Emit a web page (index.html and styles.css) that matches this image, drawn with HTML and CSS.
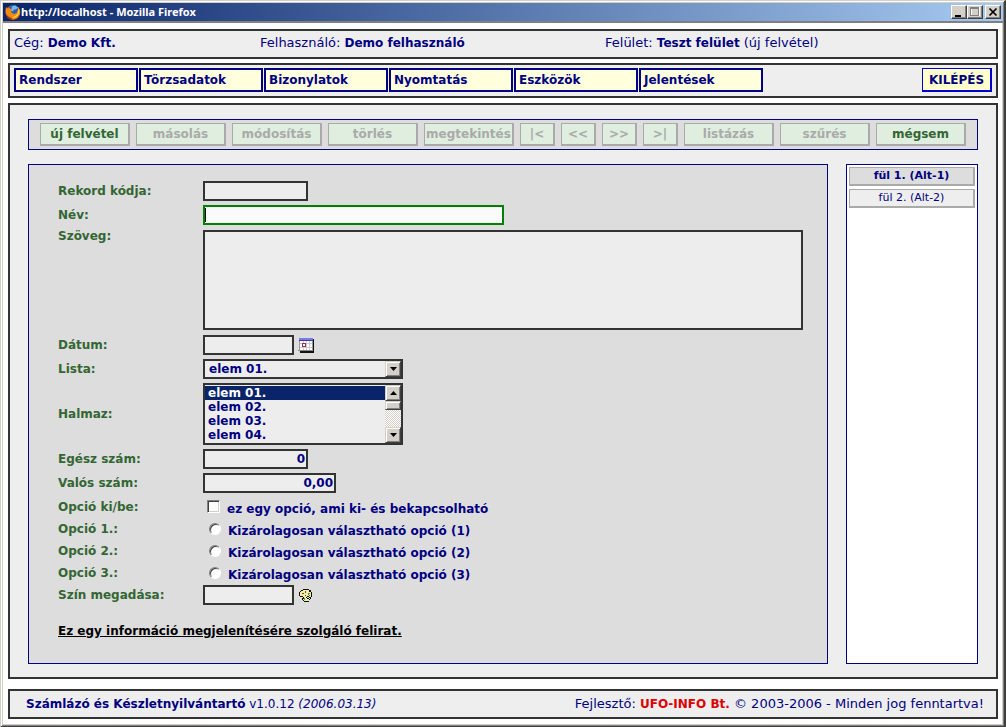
FILE: index.html
```html
<!DOCTYPE html>
<html lang="hu">
<head>
<meta charset="utf-8">
<title>http://localhost</title>
<link rel="stylesheet" href="styles.css">
</head>
<body>
<div class="window">
  <header class="titlebar">
    <svg class="app-icon" viewBox="0 0 16 16" width="16" height="16" aria-hidden="true">
      <circle cx="8" cy="8.500" r="7.300" fill="#d9580c"/>
      <circle cx="8.600" cy="6" r="5.200" fill="#2a5fb0"/>
      <path d="M7 2.500l3-1 3 2-2 2-2 0-1 2-2-1z" fill="#79b7e8"/>
      <path d="M1 3l1 1.500L4.500 4 6 5.500 7.500 6 6 7.500l1 1.500 2.500 1 2-1 1.500-3L13 3l2 3v4l-3 4-4 1.500L3 14 .8 10 .5 6z" fill="#f28a14"/>
      <path d="M13.500 4l1 3-1 4-3 2.500-4 .5 3-1.500 3-2.500z" fill="#ffd23c"/>
      <path d="M1 10l3 3 4 1.500-3 .5-3-2z" fill="#9c2d08"/>
    </svg>
    <h1 class="title">http://localhost - Mozilla Firefox</h1>
    <div class="window-buttons">
      <button type="button" class="win-btn" aria-label="Minimize"><svg viewBox="0 0 12 10" width="12" height="10"><path d="M2 8h6v2H2z" fill="#000"/></svg></button>
      <button type="button" class="win-btn" aria-label="Maximize"><svg viewBox="0 0 12 10" width="12" height="10" shape-rendering="crispEdges"><path d="M2.500 .5h8v8h-8z" fill="none" stroke="#fff"/><path d="M1.500 .5h8v8h-8zM1.500 1.500h8" fill="none" stroke="#808080"/></svg></button>
      <button type="button" class="win-btn close" aria-label="Close"><svg viewBox="0 0 12 10" width="12" height="10"><path d="M2.500 1.500l7 7M9.500 1.500l-7 7" stroke="#000" stroke-width="1.700"/></svg></button>
    </div>
  </header>
  <main class="page">
    <section class="panel info">
      <p>Cég: <b>Demo Kft.</b></p>
      <p>Felhasználó: <b>Demo felhasználó</b></p>
      <p>Felület: <b>Teszt felület</b> (új felvétel)</p>
    </section>
    <nav class="panel menu">
      <button type="button" class="menu-btn">Rendszer</button>
      <button type="button" class="menu-btn">Törzsadatok</button>
      <button type="button" class="menu-btn">Bizonylatok</button>
      <button type="button" class="menu-btn">Nyomtatás</button>
      <button type="button" class="menu-btn">Eszközök</button>
      <button type="button" class="menu-btn">Jelentések</button>
      <button type="button" class="exit">KILÉPÉS</button>
    </nav>
    <section class="panel work">
      <div class="toolbar">
        <button type="button" class="tool">új felvétel</button>
        <button type="button" class="tool" disabled>másolás</button>
        <button type="button" class="tool" disabled>módosítás</button>
        <button type="button" class="tool" disabled>törlés</button>
        <button type="button" class="tool" disabled>megtekintés</button>
        <button type="button" class="tool small" disabled>|&lt;</button>
        <button type="button" class="tool small" disabled>&lt;&lt;</button>
        <button type="button" class="tool small" disabled>&gt;&gt;</button>
        <button type="button" class="tool small" disabled>&gt;|</button>
        <button type="button" class="tool" disabled>listázás</button>
        <button type="button" class="tool" disabled>szűrés</button>
        <button type="button" class="tool">mégsem</button>
      </div>
      <div class="columns">
        <form class="form">
          <div class="row"><label for="code">Rekord kódja:</label><input id="code" class="field w-code" type="text"></div>
          <div class="row"><label for="name">Név:</label><span class="active"><input id="name" class="field w-name" type="text"></span></div>
          <div class="row top"><label for="text">Szöveg:</label><textarea id="text" class="field area"></textarea></div>
          <div class="row"><label for="date">Dátum:</label><input id="date" class="field w-date" type="text">
            <button type="button" class="icon-btn" aria-label="Naptár"><svg viewBox="0 0 16 16" width="16" height="16" shape-rendering="crispEdges"><path d="M2 2h14v14H2z" fill="#111"/><path d="M1 2h14v12H1z" fill="#9a9aa2"/><path d="M2 4h12v9H2z" fill="#fff"/><path d="M5.500 4v9M8.500 4v9M11.500 4v9M2 6.500h12M2 10.500h12" stroke="#ccc"/><path d="M1 1h14v2H1z" fill="#7b7be8"/><path d="M1 3h14v1H1z" fill="#3c3ca0"/><path d="M4.500 6.500h3v3h-3z" fill="#fff" stroke="#a0285a"/><path d="M0 13h14v1H0z" fill="#888"/></svg></button></div>
          <div class="row"><label for="list">Lista:</label><span class="combo"><select id="list"><option>elem 01.</option><option>elem 02.</option></select><span class="sb-btn"><svg viewBox="0 0 7 4" width="7" height="4"><path d="M0 0h7L3.500 4z"/></svg></span></span></div>
          <div class="row"><label for="set">Halmaz:</label><span class="listbox"><select id="set" size="4"><option class="chosen">elem 01.</option><option>elem 02.</option><option>elem 03.</option><option>elem 04.</option></select><span class="scroll"><span class="sb-btn"><svg viewBox="0 0 7 4" width="7" height="4"><path d="M0 4h7L3.500 0z"/></svg></span><span class="thumb"></span><span class="track"></span><span class="sb-btn"><svg viewBox="0 0 7 4" width="7" height="4"><path d="M0 0h7L3.500 4z"/></svg></span></span></span></div>
          <div class="row"><label for="int">Egész szám:</label><input id="int" class="field w-code num" type="text" value="0"></div>
          <div class="row"><label for="real">Valós szám:</label><input id="real" class="field w-real num" type="text" value="0,00"></div>
          <div class="row option"><span class="caption">Opció ki/be:</span><input id="chk" class="check" type="checkbox"><label for="chk">ez egy opció, ami ki- és bekapcsolható</label></div>
          <div class="row option"><span class="caption">Opció 1.:</span><input id="r1" class="radio" type="radio" name="opt"><label for="r1">Kizárolagosan választható opció (1)</label></div>
          <div class="row option"><span class="caption">Opció 2.:</span><input id="r2" class="radio" type="radio" name="opt"><label for="r2">Kizárolagosan választható opció (2)</label></div>
          <div class="row option"><span class="caption">Opció 3.:</span><input id="r3" class="radio" type="radio" name="opt"><label for="r3">Kizárolagosan választható opció (3)</label></div>
          <div class="row"><label for="color">Szín megadása:</label><input id="color" class="field w-date" type="text">
            <button type="button" class="icon-btn" aria-label="Színválasztó"><svg viewBox="0 0 16 16" width="16" height="16" shape-rendering="crispEdges"><path d="M5 2h6v1h2v2h1v5h-1v2h-2v2H6v-1H5v-3H3V9H2V5h1V3h2z" fill="#f0eda0"/><path d="M5 2h6v1H5zM3 3h2v1H3zM11 3h2v2h-2zM2 4h1v1H2zM13 5h1v5h-1zM1 5h1v4H1zM2 9h3v1H2zM5 10h1v2H5zM4 11h1v2H4zM12 10h1v2h-1zM5 13h1v1H5zM11 12h1v1h-1zM6 14h5v1H6zM9 9h2v1H9zM8 10h1v1H8zM9 11h2v1H9zM11 10h1v1h-1z" fill="#111"/><path d="M9 10h2v1H9z" fill="#ddd"/><path d="M4 6h2v1H4z" fill="#a03030"/><path d="M7 4h1v2H7z" fill="#8040a0"/><path d="M10 6h2v1h-1v1h-1z" fill="#30a050"/><path d="M11 8h1v1h-1z" fill="#c03030"/><path d="M6 11h1v2H6z" fill="#20b060"/><path d="M7 8h1v1H7z" fill="#703070"/></svg></button></div>
          <p class="note">Ez egy információ megjelenítésére szolgáló felirat.</p>
        </form>
        <aside class="tabs">
          <button type="button" class="tab current">fül 1. (Alt-1)</button>
          <button type="button" class="tab">fül 2. (Alt-2)</button>
        </aside>
      </div>
    </section>
    <footer class="panel foot">
      <p><b>Számlázó és Készletnyilvántartó</b> v1.0.12 <i>(2006.03.13)</i></p>
      <p class="developer">Fejlesztő: <b class="brand">UFO-INFO Bt.</b> © 2003-2006 - Minden jog fenntartva!</p>
    </footer>
  </main>
</div>
</body>
</html>
```
FILE: styles.css
```css
* { box-sizing: border-box; }
body {
  margin: 0;
  font: 12px/16px "DejaVu Sans", Verdana, sans-serif;
  color: #000080;
}
p, h1 { margin: 0; }
b { font-size: 12px; }
button, input, select, textarea { font: inherit; color: inherit; margin: 0; border-radius: 0; }
button { padding: 0; }
.window {
  min-height: 100vh;
  display: flex;
  flex-direction: column;
  border: 1px solid #d4d0c8;
  border-right: 2px solid #404040;
  border-bottom: 2px solid #404040;
  box-shadow: inset 1px 1px #fff, inset -1px -1px #808080, inset 2px 2px #d4d0c8, inset -2px -2px #d4d0c8;
  padding: 2px 1px 2px 2px;
  background: #fff;
}
.titlebar {
  display: flex;
  align-items: center;
  height: 20px;
  padding: 0 2px;
  background: linear-gradient(90deg, #0a246a, #a6caf0) padding-box;
  border-bottom: 2px solid #808080;
  color: #fff;
}
.title { flex: 1; font: bold 11px/18px "Noto Sans", Tahoma, sans-serif; }
.window-buttons { display: flex; }
.win-btn {
  width: 16px;
  height: 14px;
  background: #d4d0c8;
  border: 1px solid #404040;
  border-top-color: #fff;
  border-left-color: #fff;
  box-shadow: inset -1px -1px #808080;
  display: flex;
  align-items: center;
  justify-content: center;
}
.close { margin-left: 2px; }
.page { flex: 1; display: flex; flex-direction: column; padding: 6px 5px 5px; }
.panel { border: 2px solid #333; background: #eee; }
.info {
  display: grid;
  grid-template-columns: 246px 345px 1fr;
  padding: 4px;
  height: 30px;
  font-size: 13px;
}
.menu { display: flex; align-items: center; gap: 1px; margin-top: 4px; height: 35px; padding: 0 4px 1px; }
.menu-btn {
  width: 124px;
  height: 24px;
  padding: 0 3px;
  text-align: left;
  font-weight: bold;
  font-size: 12px;
  background: #ffffdd;
  border: 2px solid #000080;
}
.exit {
  margin-left: auto;
  width: 70px;
  height: 24px;
  font-weight: bold;
  background: #ffffcc;
  border: 1px solid #0000cc;
  border-right-width: 2px;
  border-bottom-width: 2px;
}
.work { flex: 1; margin-top: 5px; padding: 14px 18px 13px; }
.toolbar {
  display: flex;
  align-items: center;
  gap: 6px;
  height: 31px;
  padding: 0 11px;
  background: #ddd;
  border: 1px solid #000080;
}
.tool {
  width: 90px;
  height: 23px;
  font-weight: bold;
  color: #336633;
  background: #dfeedf;
  border: 1px solid #aaa;
  border-right-width: 2px;
  border-bottom-width: 2px;
  white-space: nowrap;
}
.tool:disabled { color: #aaa; }
.small { width: 35px; }
.columns { display: flex; gap: 18px; margin-top: 14px; }
.form {
  flex: 1;
  min-width: 0;
  min-height: 500px;
  display: flex;
  flex-direction: column;
  gap: 4px;
  padding: 16px 24px 20px 29px;
  background: #ddd;
  border: 1px solid #000080;
  font-weight: bold;
}
.row { display: flex; align-items: center; }
.row > :first-child { width: 145px; flex: none; color: #336633; }
.top { align-items: flex-start; padding: 1px 0; }
.top > label { line-height: 13px; }
.field { height: 20px; padding: 0 1px; background: #ededed; border: 2px solid #333; outline: none; }
.area { display: block; flex: 1; height: 100px; resize: none; }
.w-code { width: 105px; }
.w-name { width: 301px; border-color: #008000; background: #fafafa; }
.w-date { width: 91px; }
.w-real { width: 133px; }
.num { text-align: right; }
.active { display: flex; position: relative; }
.active::before { content: ""; position: absolute; left: 2px; top: 3px; width: 1px; height: 14px; background: #000; }
.icon-btn { margin-left: 4px; width: 16px; height: 16px; border: 0; background: none; }
.icon-btn svg { display: block; }
.combo, .listbox { display: flex; width: 200px; border: 2px solid #333; background: #ededed; }
.combo { height: 20px; }
.combo select, .listbox select {
  appearance: none;
  flex: 1;
  min-width: 0;
  border: 0;
  outline: none;
  background: none;
  font-weight: bold;
}
.combo select { padding: 0 4px; }
.listbox { height: 62px; }
.listbox select { padding: 1px 0; overflow: hidden; }
.listbox option { padding: 0 3px; min-height: 14px; height: 14px; font: bold 12px/14px "DejaVu Sans", Verdana, sans-serif; }
.listbox .chosen { background: #0a246a; color: #fff; }
.sb-btn {
  flex: none;
  width: 16px;
  height: 16px;
  display: flex;
  align-items: center;
  justify-content: center;
  background: #d4d0c8;
  border: 1px solid #404040;
  border-top-color: #d4d0c8;
  border-left-color: #d4d0c8;
  box-shadow: inset 1px 1px #fff, inset -1px -1px #808080;
}
.scroll { display: flex; flex-direction: column; width: 16px; }
.thumb { height: 9px; background: #d4d0c8; border: 1px solid #404040; border-top-color: #d4d0c8; border-left-color: #d4d0c8; box-shadow: inset 1px 1px #fff, inset -1px -1px #808080; }
.track { flex: 1; background: repeating-conic-gradient(#d4d0c8 0 25%, #fff 0 50%) 0 0 / 2px 2px; }
.option { height: 18px; align-items: flex-start; }
.caption { line-height: 20px; }
.option label { padding-top: 4px; margin-left: 7px; }
.check, .radio { appearance: none; background: #fff; flex: none; }
.check {
  width: 13px;
  height: 13px;
  margin: 3px 0 0 4px;
  border: 1px solid #808080;
  border-right-color: #fff;
  border-bottom-color: #fff;
  box-shadow: inset 1px 1px #404040, inset -1px -1px #d4d0c8;
}
.radio {
  width: 12px;
  height: 12px;
  margin: 4px 0 0 6px;
  border-radius: 50%;
  border: 1px solid #808080;
  border-right-color: #fff;
  border-bottom-color: #fff;
  box-shadow: inset 1px 1px #404040;
}
.note { margin-top: 14px; color: #000; text-decoration: underline; }
.tabs {
  flex: none;
  width: 132px;
  display: flex;
  flex-direction: column;
  gap: 3px;
  padding: 2px;
  background: #fff;
  border: 1px solid #000080;
}
.tab {
  height: 19px;
  font-size: 11px;
  line-height: 14px;
  background: #eee;
  border: 1px solid #aaa;
  border-right-width: 2px;
  border-bottom-width: 2px;
}
.current { font-weight: bold; background: #ddd; }
.foot { display: flex; justify-content: space-between; margin-top: 10px; height: 30px; padding: 5px 12px 5px 16px; }
.developer { font-size: 13px; }
.brand { color: #dd0000; }
```
